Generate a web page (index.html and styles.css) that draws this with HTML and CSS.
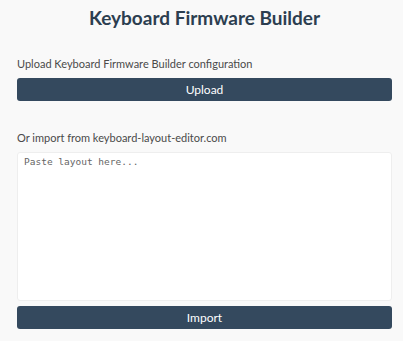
FILE: index.html
```html
<!DOCTYPE html>
<html lang="en">
<head>
    <meta charset="UTF-8">
    <title>Keyboard Firmware Builder</title>
    <link rel="stylesheet" href="styles.css">
</head>
<body>
    <div id="app">
        <h1 class="title">Keyboard Firmware Builder</h1>
        <div class="section">
            <div class="label">Upload Keyboard Firmware Builder configuration</div>
            <button class="btn">Upload</button>
        </div>
        <div class="section">
            <div class="label">Or import from keyboard-layout-editor.com</div>
            <textarea class="layout" placeholder="Paste layout here..."></textarea>
            <button class="btn">Import</button>
        </div>
    </div>
</body>
</html>
```

FILE: styles.css
```css
body {
    margin: 0;
    padding: 0;
    background: #f9f9f9;
    font-family: Lato, "Open Sans", sans-serif;
    color: #2c3e50;
}

#app {
    padding: 0 11px 0 17px;
    display: flex;
    flex-direction: column;
}

.title {
    margin: 6px 0 0;
    text-align: center;
    font-size: 19px;
    font-weight: 700;
    line-height: 24px;
    color: #2c3e50;
}

.section {
    display: flex;
    flex-direction: column;
}

.section + .section {
    margin-top: 30px;
}

.label {
    margin-top: 27px;
    font-size: 11px;
    line-height: 13px;
    color: #4a4a4a;
    margin-bottom: 8px;
}

.section + .section .label {
    margin-top: 0;
    margin-bottom: 8px;
}

.btn {
    height: 23px;
    padding: 0;
    background: #34495e;
    color: white;
    border: none;
    border-radius: 3px;
    font-family: inherit;
    font-size: 12px;
    cursor: pointer;
}

.layout {
    height: 149px;
    padding: 3px 6px;
    box-sizing: border-box;
    background: white;
    border: 1px solid #eee;
    border-radius: 3px;
    font-family: "DejaVu Sans Mono", monospace;
    font-size: 9.5px;
    resize: none;
    margin-bottom: 5px;
}

.layout::placeholder {
    color: #666;
}
```
